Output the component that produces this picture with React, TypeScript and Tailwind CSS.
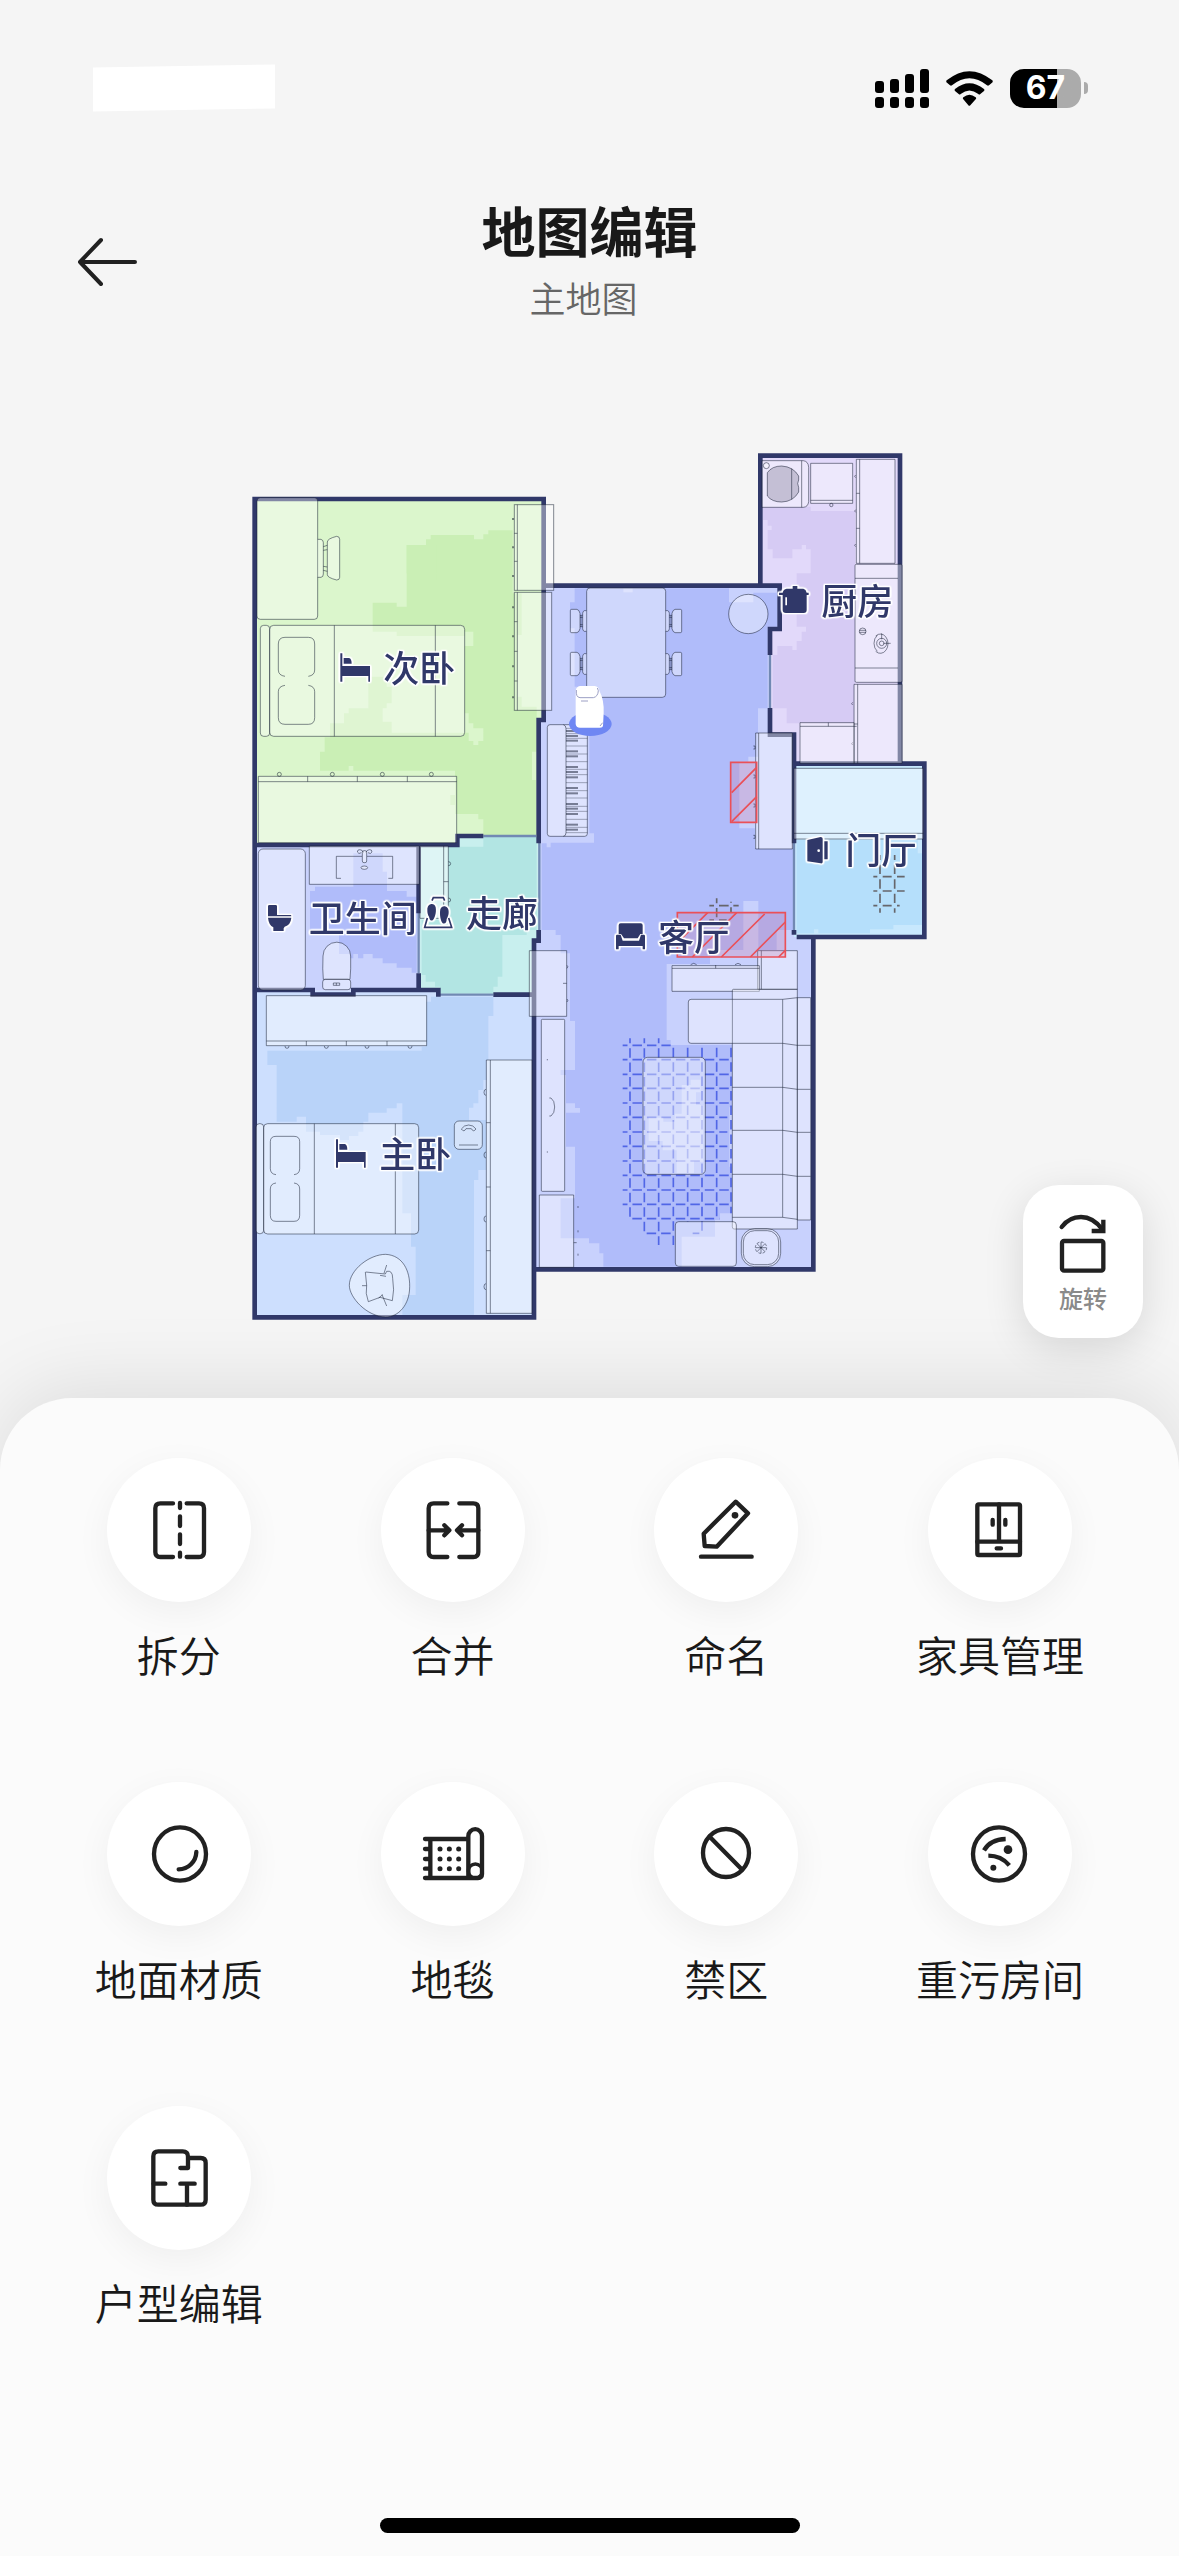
import type { ReactNode } from "react";

const ink = "#212121";
const navy = "#303869";

const line = {
  fill: "none",
  stroke: ink,
  strokeWidth: 13,
  strokeLinecap: "round",
  strokeLinejoin: "round",
} as const;

const tools: { label: string; viewBox: string; icon: ReactNode }[] = [
  {
    label: "拆分",
    viewBox: "249 162 216 216",
    icon: (
      <>
        <path d="M339 190H301Q286 190 286 205V336Q286 351 301 351H339M380 190H417Q432 190 432 205V336Q432 351 417 351H380" />
        <path d="M360 189V204M360 229V258M360 283V312M360 338V350" />
      </>
    ),
  },
  {
    label: "合并",
    viewBox: "1070 162 216 216",
    icon: (
      <>
        <path d="M1161 190H1120Q1105 190 1105 205V336Q1105 351 1120 351H1161M1197 190H1239Q1254 190 1254 205V336Q1254 351 1239 351H1197" />
        <path d="M1105 271H1163M1152 256L1167 271L1152 286M1254 271H1195M1205 256L1190 271L1205 286" />
      </>
    ),
  },
  {
    label: "命名",
    viewBox: "211 162 216 216",
    icon: (
      <>
        <path d="M348 185L385 220L291 320L255 318L252 281Z" />
        <circle cx="346" cy="226" r="10" fill={ink} stroke="none" />
        <path d="M244 350H396" />
      </>
    ),
  },
  {
    label: "家具管理",
    viewBox: "1032 162 216 216",
    icon: (
      <>
        <rect x="1072" y="193" width="128" height="152" rx="4" />
        <path d="M1137 193V304M1072 305H1200M1118 240V254M1156 240V254M1130 325H1143" />
      </>
    ),
  },
  {
    label: "地面材质",
    viewBox: "249 174 216 216",
    icon: (
      <>
        <ellipse cx="360" cy="282" rx="78" ry="80" />
        <path d="M409 276C408 305 385 328 356 328" />
      </>
    ),
  },
  {
    label: "地毯",
    viewBox: "1070 174 216 216",
    icon: (
      <>
        <path d="M1094 237H1220M1094 354H1253Q1265 354 1265 342V228A20 20 0 0 0 1224 228V354M1110 237V354M1094 267H1108M1094 297H1108M1094 326H1108" />
        <circle cx="1245" cy="333" r="21" strokeWidth="10" />
        <path
          strokeWidth="15"
          d="M1139 267h.1M1167 267h.1M1195 267h.1M1139 297h.1M1167 297h.1M1195 297h.1M1139 326h.1M1167 326h.1M1195 326h.1"
        />
      </>
    ),
  },
  {
    label: "禁区",
    viewBox: "211 174 216 216",
    icon: (
      <>
        <ellipse cx="319" cy="279" rx="69" ry="72" />
        <path d="M270 230L366 328" />
      </>
    ),
  },
  {
    label: "重污房间",
    viewBox: "1032 174 216 216",
    icon: (
      <>
        <ellipse cx="1137" cy="282" rx="78" ry="80" />
        <path strokeLinecap="butt" d="M1092 271C1104 250 1126 238 1157 237M1105 287C1130 287 1151 296 1168 316" />
        <circle cx="1164" cy="269" r="13" fill={ink} stroke="none" />
        <circle cx="1120" cy="323" r="9" fill={ink} stroke="none" />
      </>
    ),
  },
  {
    label: "户型编辑",
    viewBox: "249 156 216 216",
    icon: (
      <>
        <path d="M361 234H384V200Q384 184 368 184H295Q280 184 280 199V329Q280 344 295 344H422Q437 344 437 329V219Q437 204 422 204H386" />
        <path d="M281 281H316M361 281H404M381 281V344" />
      </>
    ),
  },
];

// Map drawing units are a third of a pixel.
function Floors() {
  return (
    <>
      <path fill="#dbf6cc" d="M44 177H910V840H896V1188H655V1215H44Z" />
      <path
        fill="#caefb5"
        d="M500 315H558V298H572V285H702V298H730V283H745V271H818V460H845V585H832V770H845V800H890V935H876V1020H888V1188H730V1138H715V1122H645V1095H631V1065H645V992H543V978V992H340V978H326V992H240V935H254V892H270V850H312V820H326V805H385V710H440V740H455V790H440V805H428V845H455V878H686V903H700V915H715V903H730V865H700V850H686V820H674V618H700V575H674V588H470V575H398V488H470V500H500Z"
      />
      <path fill="#caefb5" d="M500 315H590V420H512V400H500Z" />

      {/* living room */}
      <path
        fill="#c8d1fd"
        d="M910 437H1619V567H1590V884H1662V1491H1720V2488H882V1500H898V840H910Z"
      />
      <path
        fill="#b0bcfa"
        d="M1004 445H1467V487H1540V458H1612V560H1583V805H1554V950H1525V965H1498V1165H1545V1225H1660V1470H1610V1530H1555V1383H1510V1530H1410V1572H1280V1800H1292V1815H1476V2002H1468V2180H1476V2320H1440V2340H1425V2390H1325V2480H1090V2440H1078V2410H1047V2395H962V2275H1005V2120H978V2018H1020V2004H1005V1990H978V1905H962V1890H1005V1743H990V1540H962V1485H947V1470H905V1210H920V1222H932V1208H1062V1180H1048V870H1020V740H1004V565H990V487H1004Z"
      />
      <path fill="#c8d1fd" d="M1150 445h28v12h-28z" />

      {/* kitchen */}
      <path fill="#e2d9fa" d="M1561 47H1980V970H1662V884H1590V567H1619V437H1561Z" />
      <path
        fill="#d6cbf4"
        d="M1569 200H1712V213H1845V850H1640V805H1598V645H1612V618H1657V630H1670V603H1685V575H1698V560H1670V400H1712V328H1698V315H1685V328H1657V355H1598V328H1583V270H1595V257H1583V240H1569Z"
      />

      {/* entrance */}
      <path fill="#c8e8fd" d="M1662 971H2053V1491H1662Z" />
      <path fill="#b5dffb" d="M1670 1200H2033V1240H2046V1455H1960V1468H1890V1480H1735V1468H1722V1480H1670Z" />

      <g transform="translate(0 1140)">
        {/* bathroom */}
        <path fill="#c9d2fd" d="M44 75H536V512H44Z" />
        <path
          fill="#b0bcfa"
          d="M210 213H225V200H340V100H428V155H441V213H500V230H530V458H515V443H470V430H428V415H398V402H370V415H354V402H340V415H330V402H297V345H210Z"
        />
        {/* corridor */}
        <path fill="#c8efee" d="M540 75H655V47H896V360H882V524H600V512H540Z" />
        <path
          fill="#b2e5e3"
          d="M625 80H730V50H890V330H860V345H787V470H773V500H760V520H600V500H585V485H557V465H545V300H625Z"
        />
        {/* master bedroom */}
        <path fill="#cddffe" d="M44 512H595V524H882V1492H44Z" />
        <path
          fill="#b9d3f9"
          d="M558 545H573V530H760V588H745V720H740V780H730V810H715V850H700V863H687V900H738V1050H715V1080H702V1485H487V1425H527V1280H513V1180H487V850H470V865H440V878H385V905H370V935H355V948H327V960H300V945H240V935H198V890H170V905H110V735H82V692H545V680H558Z"
        />
      </g>
    </>
  );
}

function Walls() {
  return (
    <>
      <g fill="none" stroke="#7189b3" strokeWidth="7">
        <path d="M730 1188H888M1590 645V806M898 1208V1470M1662 1208V1470M536 1400V1600M600 1664H760" />
      </g>
      <g fill="none" stroke={navy} strokeWidth="14">
        <path d="M896 1210V840H911V177H44V2632H882V1502H896V1470" />
        <path d="M44 1215H652V1188H730M911 437H1619V567H1590V645M1561 437V47H1980V971M1590 804V884H1662V1210M1662 971H2053V1491H1670M1662 1470V1484M1720 1491V2488H882" />
        <path d="M44 1650H218V1664H340V1650H595V1670M760 1664H882M536 1600V1650M536 1215V1420" />
      </g>
    </>
  );
}

const rugColumns = [
  { x: 330, from: 655, to: 1190 },
  { x: 373, from: 655, to: 1235 },
  { x: 416, from: 655, to: 1275 },
  { x: 460, from: 683, to: 1275 },
  { x: 503, from: 683, to: 1205 },
  { x: 546, from: 683, to: 1235 },
  { x: 590, from: 683, to: 1200 },
  { x: 633, from: 683, to: 1180 },
];

const rugRows = [
  { y: 676, from: 308, to: 452 },
  { y: 719, from: 308, to: 636 },
  { y: 763, from: 308, to: 636 },
  { y: 805, from: 308, to: 636 },
  { y: 849, from: 308, to: 636 },
  { y: 892, from: 308, to: 622 },
  { y: 936, from: 308, to: 622 },
  { y: 979, from: 308, to: 622 },
  { y: 1023, from: 308, to: 622 },
  { y: 1066, from: 308, to: 636 },
  { y: 1110, from: 308, to: 636 },
  { y: 1153, from: 308, to: 636 },
  { y: 1196, from: 337, to: 598 },
  { y: 1240, from: 380, to: 460 },
];

function Rugs() {
  return (
    <g transform="translate(840 1140)" fill="none" strokeWidth="5">
      <g stroke="#5166e6" strokeDasharray="28.5 14.9">
        {rugColumns.map((c) => (
          <path key={c.x} d={`M${c.x} ${c.from}V${c.to}`} strokeDashoffset={c.from === 655 ? 14 : 0} />
        ))}
        {rugRows.map((r) => (
          <path key={r.y} d={`M${r.from} ${r.y}H${r.to}`} strokeDashoffset={r.from === 308 ? 14 : 0} />
        ))}
        <path d="M518 1240H538" />
      </g>
      <g stroke="#66666b">
        <path d="M590 235V250M590 264V292M633 245V248M633 262V277M568 257H582M597 257H626M640 257H656M568 300H582M597 300H620" />
        <path d="M1080 105V120M1080 134V162M1080 178V206M1080 221V249M1080 265V278M1124 105V120M1124 134V162M1124 178V206M1124 221V249M1124 265V278" />
        <path d="M1060 170H1072M1088 170H1115M1131 170H1154M1060 213H1072M1088 213H1115M1131 213H1154M1060 257H1072M1088 257H1115M1131 257H1139" />
      </g>
    </g>
  );
}

function DiningChair({ x, y, flip }: { x: number; y: number; flip?: boolean }) {
  return (
    <g transform={flip ? `translate(${x} ${y}) scale(-1 1)` : `translate(${x} ${y})`}>
      <path d="M4 0H20Q27 2 29 12V58Q27 68 20 70H4Q0 70 0 66V4Q0 0 4 0Z" />
      <path d="M48 4H42Q37 6 37 12V58Q37 64 42 66H48M29 18H37M29 24H37M29 46H37M29 52H37M32 18V52" />
    </g>
  );
}

function PianoKeys() {
  const black = [873, 888, 902, 934, 949, 981, 996, 1012, 1044, 1060, 1092, 1106, 1122, 1154, 1169];
  const white = [865, 881, 895, 918, 942, 965, 988, 1004, 1028, 1052, 1074, 1099, 1114, 1138, 1162, 1178];
  return (
    <g fill="none">
      {white.map((y) => (
        <path key={y} d={`M978 ${y}H1042`} strokeWidth="2" />
      ))}
      {black.map((y) => (
        <path key={y} d={`M978 ${y}H1014`} strokeWidth="6" />
      ))}
    </g>
  );
}

function Furniture() {
  return (
    <g className="fill-white/40 stroke-slate-900/50" strokeWidth="3">
      {/* second bedroom */}
      <rect x="51" y="173" width="182" height="365" rx="10" />
      <path d="M233 298H243Q250 300 250 308V402Q250 411 243 412H233M250 320L262 316M250 331L262 329M250 379L262 381M250 391L262 394" />
      <path d="M262 306Q262 296 290 289Q299 289 299 298V412Q299 420 290 420Q262 413 262 404Z" />
      <rect x="61" y="556" width="28" height="333" rx="10" />
      <rect x="89" y="556" width="585" height="333" rx="12" />
      <path fill="none" d="M283 556V889M586 556V889" />
      <path className="fill-none" d="M135 709Q115 706 115 690V612Q115 592 135 592H205Q224 592 224 612V690Q224 706 205 709M135 736Q115 739 115 755V833Q115 853 135 853H205Q224 853 224 833V755Q224 739 205 736" />
      <rect x="823" y="194" width="118" height="257" />
      <rect x="823" y="457" width="112" height="354" />
      <path fill="none" d="M832 194V451M832 457V811M823 280H832M823 364H832M823 545H832M823 634H832M823 723H832" />
      <path fill="none" d="M816 237h6M816 322h6M816 408h6M816 502h6M816 589h6M816 679h6M816 772h6" strokeWidth="6" />
      <path d="M55 1009H650V1208H55Z" />
      <path fill="none" d="M55 1025H650M203 1009V1025M352 1009V1025M502 1009V1025" />
      <g fill="none">
        <circle cx="118" cy="1003" r="6" />
        <circle cx="277" cy="1003" r="6" />
        <circle cx="427" cy="1003" r="6" />
        <circle cx="574" cy="1003" r="6" />
      </g>

      {/* dining area and piano */}
      <rect x="1040" y="444" width="237" height="328" rx="10" />
      <DiningChair x={991} y={508} />
      <DiningChair x={991} y={637} />
      <DiningChair x={1325} y={508} flip />
      <DiningChair x={1325} y={637} flip />
      <circle cx="1525" cy="522" r="59" />
      <rect x="922" y="854" width="120" height="335" rx="8" />
      <path fill="none" d="M970 854Q978 856 978 866V1178Q978 1188 970 1189" />
      <PianoKeys />
      <path d="M1547 879H1657V1227H1547Z" />
      <path fill="none" d="M1556 879V1227M1540 918h5v9h-5M1540 1005h5v9h-5M1540 1092h5v9h-5M1540 1186h5v9h-5" />

      {/* kitchen */}
      <path d="M1566 62H1690Q1705 64 1706 82V185Q1704 201 1690 202H1566Z" />
      <path fill="none" d="M1685 62V202" />
      <circle cx="1579" cy="77" r="9" />
      <path
        className="fill-[#a8a4bb]/60"
        d="M1582 98Q1596 78 1625 78Q1660 80 1676 108V120Q1670 130 1676 142V156Q1660 185 1625 186Q1596 186 1582 168Z"
      />
      <path fill="none" d="M1655 86V178" />
      <path d="M1712 70H1838V190H1712Z" />
      <path fill="none" d="M1712 181H1838" />
      <circle cx="1774" cy="195" r="5" fill="none" />
      <path d="M1849 58H1965V370H1849Z" />
      <path fill="none" d="M1859 58V370M1849 160H1859M1849 265H1859" />
      <path fill="none" d="M1847 105q-6 4 0 8M1847 209q-6 4 0 8M1847 312q-6 4 0 8M1838 787q-6 4 0 8M1838 907q-6 4 0 8" />
      <rect x="1845" y="373" width="141" height="354" rx="4" />
      <path fill="none" d="M1845 415H1974M1845 684H1974" />
      <g fill="none">
        <circle cx="1868" cy="574" r="10" />
        <path d="M1858 571H1878M1858 577H1878" />
        <path d="M1907 588A23 29 0 1 1 1907 634M1902 610A23 29 0 0 1 1912 586M1912 634A23 29 0 0 1 1902 610M1925 598V580M1930 610H1952" />
        <circle cx="1925" cy="610" r="15" />
        <circle cx="1925" cy="610" r="7" />
      </g>
      <path d="M1842 733H1986V970H1842Z" />
      <path fill="none" d="M1853 733V970" />
      <path d="M1680 848H1842V970H1680Z" />
      <path fill="none" d="M1680 859H1850M1765 848V859M1842 852H1853" />

      {/* entrance cabinet */}
      <path d="M1662 985H2050V1197H1662Z" />
      <path fill="none" d="M1662 1180H2050M1858 1180V1190" />

      <g transform="translate(0 1140)">
        {/* bathroom */}
        <rect x="55" y="87" width="141" height="423" rx="14" />
        <path d="M208 78H538V193H208Z" />
        <path fill="none" d="M303 175H289V109H366M381 109H458V175H445" />
        <rect x="367" y="92" width="13" height="36" rx="5" />
        <path fill="none" d="M352 96q0 -8 8 -7t10 8M396 96q0 -8 -8 -7t-10 8M352 96q4 8 12 2M396 96q-4 8 -12 2" />
        <ellipse cx="373" cy="143" rx="10" ry="5" />
        <path d="M250 478Q247 450 249 408A41 41 0 0 1 332 408Q333 450 330 478Z" />
        <rect x="248" y="478" width="84" height="31" rx="8" />
        <path fill="none" d="M280 489h19v7h-19zM289 489v7" />
        {/* corridor cabinet */}
        <path d="M540 78H625V295H540Z" />
        <path fill="none" d="M611 78V295M611 185H625M625 125q7 0 7 6t-7 6M625 234q7 0 7 6t-7 6" />
        {/* master bedroom */}
        <path d="M79 527H560V677H79Z" />
        <path fill="none" d="M79 663H560M199 663V677M319 663V677M441 663V677" />
        <path fill="none" d="M135 678q0 7 6 7t6 -7M253 678q0 7 6 7t6 -7M375 678q0 7 6 7t6 -7M504 678q0 7 6 7t6 -7" />
        <rect x="48" y="911" width="23" height="330" rx="10" />
        <rect x="71" y="911" width="465" height="331" rx="12" />
        <path fill="none" d="M223 911V1242M466 911V1242" />
        <path className="fill-none" d="M108 1064Q91 1062 91 1046V965Q91 949 108 949H162Q179 949 179 965V1046Q179 1062 162 1064M108 1089Q91 1091 91 1107V1186Q91 1204 108 1204H162Q179 1204 179 1186V1107Q179 1091 162 1089" />
        <path d="M739 720H876V1480H739Z" />
        <path fill="none" d="M751 720V1480M739 908H751M739 1101H751M739 1292H751" />
        <path fill="none" d="M738 808q-6 0 -6 9t6 9M738 996q-6 0 -6 9t6 9M738 1188q-6 0 -6 9t6 9M738 1391q-6 0 -6 9t6 9" />
        <rect x="643" y="903" width="84" height="85" rx="14" />
        <path className="fill-none" d="M657 975H714M664 927Q672 915 686 915Q700 915 708 927Q700 938 694 926H678Q672 938 664 927Z" />
        <path d="M328 1396C328 1350 388 1303 437 1303C490 1306 510 1355 509 1400C509 1455 475 1491 437 1491C380 1490 328 1432 328 1396Z" />
        <path className="fill-none" d="M377 1356L436 1362L440 1354Q458 1350 458 1375Q464 1410 457 1442L420 1432L385 1445Q375 1420 380 1396L376 1356M440 1335L432 1360M420 1366L438 1369M366 1397H380M426 1424L440 1458M416 1434L428 1424" />
      </g>

      {/* living room */}
      <g transform="translate(840 1140)">
        <path d="M28 392H140V589H28Z" />
        <path fill="none" d="M129 490H140M141 436q5 4 0 9M141 537q5 4 0 9" />
        <rect x="64" y="598" width="70" height="516" rx="3" />
        <path className="fill-none" d="M82 717v4M82 994v4M88 834H93Q104 842 104 861Q104 880 93 888H88" />
        <path d="M58 1125H161V1342H58Z" />
        <path fill="none" d="M174 1158v6M174 1231v6M161 1268H170M174 1301v6" />
        <path d="M713 392H832V508H713Z" />
        <path d="M456 437H718V514H456Z" />
        <path className="fill-none" d="M456 445H718M587 435V445M724 392V508M512 434q9 -8 18 0M645 434q9 -8 18 0" />
        <path d="M640 508H832V1227H642Q637 1227 637 1220V512Q637 508 640 508Z" />
        <path d="M637 538H513Q505 538 505 546V662Q505 670 513 670H637" />
        <path
          className="fill-none"
          d="M637 538H788V1192M637 670H788M637 802H788M637 931H788M637 1063H788M637 1192H788M788 538L832 533M788 670L832 676M788 802L832 808M788 931L832 937M788 1063L832 1069M788 1192L832 1198"
        />
        <path d="M832 533H872V1200H832Z" />
        <path fill="none" d="M832 676H872M832 808H872M832 937H872M832 1069H872" />
        <rect x="369" y="712" width="187" height="351" rx="14" />
        <path className="fill-white/30 stroke-none" d="M485 795h27v-16h30v38h-14v38h22v170h-28v34h-52v-68h-42v-28h-42v-70h44v12h34v-24h21z" />
        <rect x="466" y="1205" width="183" height="134" rx="10" />
        <rect x="664" y="1226" width="118" height="114" rx="40" />
        <rect x="670" y="1232" width="106" height="102" rx="34" className="fill-none" />
        <path className="fill-none" d="M723 1267V1300M707 1283H739M711 1271L735 1295M735 1271L711 1295" />
        <circle cx="723" cy="1283" r="17" className="fill-none" strokeDasharray="8 5" />
      </g>
    </g>
  );
}

function ForbiddenZones() {
  return (
    <g fill="#c8709a" fillOpacity="0.25" stroke="#ea5058" strokeWidth="5">
      <path d="M1472 967H1550V1147H1472Z" />
      <path fill="none" d="M1475 1058L1550 982M1475 1145L1550 1070" />
      <path d="M1312 1418H1636V1551H1312Z" />
      <path fill="none" d="M1312 1509L1403 1418M1357 1551L1490 1418M1444 1551L1574 1422M1531 1551L1636 1446M1616 1551L1636 1531" />
    </g>
  );
}

const BedIcon = ({ x, y }: { x: number; y: number }) => (
  <path
    transform={`translate(${x} ${y})`}
    d="M0 0H6V38H89V85H84V68H6V85H0ZM10 14H26Q34 16 34 31H10Z"
  />
);

const rooms: { name: string; x: number; y: number; icon: ReactNode }[] = [
  { name: "次卧", x: 430, y: 726, icon: <BedIcon x={301} y={640} /> },
  { name: "主卧", x: 418, y: 2184, icon: <BedIcon x={288} y={2098} /> },
  {
    name: "卫生间",
    x: 206,
    y: 1476,
    icon: <path d="M84 1399Q84 1395 88 1395H107Q111 1395 111 1399V1425H152Q154 1425 154 1429H84ZM84 1433H154Q152 1455 134 1460L131 1465V1473H100V1462Q86 1455 84 1433Z" />,
  },
  {
    name: "走廊",
    x: 678,
    y: 1460,
    icon: (
      <>
        <path d="M562 1410C561 1390 583 1386 587 1402C590 1418 584 1436 578 1441C569 1444 569 1436 567 1430C563 1424 562 1418 562 1410ZM626 1416C627 1397 606 1392 601 1408C598 1424 602 1444 608 1450C617 1453 620 1445 620 1437C624 1430 626 1424 626 1416Z" />
        <path fill="none" stroke={navy} strokeWidth="5" d="M576 1382L580 1373H610L614 1382M562 1434L554 1462H635L626 1434" />
      </>
    ),
  },
  {
    name: "客厅",
    x: 1254,
    y: 1534,
    icon: (
      <path d="M1142 1450H1202Q1208 1450 1208 1456V1482H1201L1193 1495H1152L1143 1482H1136V1456Q1136 1450 1142 1450ZM1131 1484H1142L1148 1502H1197L1203 1484H1211Q1215 1484 1215 1488V1528H1208V1518H1136V1528H1128V1488Q1128 1484 1131 1484Z" />
    ),
  },
  {
    name: "厨房",
    x: 1744,
    y: 525,
    icon: (
      <path d="M1658 438H1672V446H1690Q1698 448 1700 458H1706V465H1700V510Q1700 519 1691 519H1638Q1628 519 1628 510V465H1617V458H1628Q1630 448 1640 446H1658ZM1636 472V496H1641V472Z" fillRule="evenodd" />
    ),
  },
  {
    name: "门厅",
    x: 1816,
    y: 1273,
    icon: (
      <>
        <path d="M1702 1200L1742 1191Q1748 1191 1748 1196V1266Q1748 1271 1742 1270L1702 1264ZM1753 1204H1763V1258H1753Z" />
        <circle cx="1736" cy="1232" r="4" fill="#fff" />
      </>
    ),
  },
];

function FloorPlan() {
  return (
    <svg viewBox="0 0 2100 2670" className="w-[700px] max-w-full" role="img" aria-label="主地图">
      <Floors />
      <Rugs />
      <Walls />
      <Furniture />
      <ForbiddenZones />

      {/* robot on its dock */}
      <ellipse cx="1051" cy="852" rx="64" ry="36" fill="#6f87f3" />
      <path fill="#fff" d="M1020 738H1064Q1076 740 1078 752Q1093 780 1091 820L1089 858Q1088 863 1080 863H1020Q1008 863 1007 852V752Q1009 740 1020 738Z" />
      <path fill="none" stroke="#9c9fc4" strokeWidth="3" d="M1009 750Q1007 772 1020 773H1060Q1074 770 1075 752L1072 744M1023 783H1044M1080 858L1088 848" />

      {/* white halo keeps the names readable over walls and furniture */}
      <g
        fill={navy}
        className="[filter:drop-shadow(4px_0_0_#fff)_drop-shadow(-4px_0_0_#fff)_drop-shadow(0_4px_0_#fff)_drop-shadow(0_-4px_0_#fff)]"
      >
        {rooms.map((room) => (
          <g key={room.name}>
            {room.icon}
            <text x={room.x} y={room.y} fontSize="108" className="font-medium">
              {room.name}
            </text>
          </g>
        ))}
      </g>
    </svg>
  );
}

function StatusBar() {
  return (
    <div className="flex h-44 items-center justify-between pr-[91px] pl-[93px]">
      <div className="h-11 w-[182px] -skew-y-1 bg-white" />
      <div className="flex items-center gap-[17px]">
        <svg viewBox="0 0 54 39" className="h-[39px] w-[54px]">
          <rect x="0" y="12" width="9" height="12" rx="3" />
          <rect x="15" y="10" width="9" height="14" rx="3" />
          <rect x="30" y="5" width="9" height="19" rx="3" />
          <rect x="45" y="0" width="9" height="24" rx="3" />
          <rect x="0" y="28" width="9" height="11" rx="3" />
          <rect x="15" y="28" width="9" height="11" rx="3" />
          <rect x="30" y="28" width="9" height="11" rx="3" />
          <rect x="45" y="28" width="9" height="11" rx="3" />
        </svg>
        <svg viewBox="0 0 141 105" className="h-[35px] w-[47px]">
          <path d="M2 28Q70 -27 139 28Q142 32 138 35L129 43Q126 45 123 43Q70 1 18 43Q15 45 12 43L3 35Q-1 32 2 28Z" />
          <path d="M27 54Q70 19 114 54Q117 57 114 60L103 69Q100 72 97 69Q70 48 44 69Q41 72 38 69L27 60Q24 57 27 54Z" />
          <path d="M52 79Q70 64 89 79Q92 82 89 85L73 103Q70 106 67 103L52 85Q49 82 52 79Z" />
        </svg>
        <div className="flex items-center gap-[3px]">
          <div className="flex h-[39px] w-[71px] items-center justify-center rounded-[14px] bg-linear-to-r from-black from-66% to-[#ababab] to-66% font-['Inter'] text-[32px] font-bold text-white">
            67
          </div>
          <div className="h-3 w-1 rounded-r-full bg-[#ababab]" />
        </div>
      </div>
    </div>
  );
}

export default function App() {
  return (
    <div className="flex min-h-screen flex-col overflow-hidden bg-[#f5f5f5] font-['Noto_Sans_CJK_SC',sans-serif] text-[#191919]">
      <StatusBar />

      <header className="mt-4 grid grid-cols-[1fr_auto_1fr] items-center px-[77px]">
        <button type="button" aria-label="返回" className="w-[60px] pt-2">
          <svg viewBox="0 0 60 50" className="w-full" fill="none" stroke={ink} strokeWidth="4" strokeLinecap="round" strokeLinejoin="round">
            <path d="M24 4L3 26L24 48M3 26H58" />
          </svg>
        </button>
        <div className="text-center">
          <h1 className="text-[54px] leading-[76px] font-bold">地图编辑</h1>
          <p className="mt-1 pr-3 text-[36px] leading-[50px] font-[350] text-[#666666]">主地图</p>
        </div>
      </header>

      <main className="relative flex justify-center pt-[118px] pb-[68px]">
        <FloorPlan />
        <button
          type="button"
          className="absolute right-9 bottom-[60px] z-10 flex h-[153px] w-[120px] flex-col items-center rounded-[36px] bg-white pt-[27px] shadow-[0_10px_40px_rgba(0,0,0,0.12)]"
        >
          <svg viewBox="203 156 150 186" className="h-[62px] w-[50px]" {...line}>
            <path d="M214 201Q236 171 272 171Q308 171 336 208" />
            <path d="M339 179V213H304" strokeLinecap="butt" strokeLinejoin="miter" />
            <rect x="215" y="243" width="124" height="89" rx="6" />
          </svg>
          <span className="mt-2 text-[24px] leading-8 font-medium text-[#8a8a8a]">旋转</span>
        </button>
      </main>

      <section className="flex flex-1 flex-col justify-between rounded-t-[72px] bg-[#fbfbfb] px-[42px] pt-[60px] pb-[23px] shadow-[0_-10px_80px_rgba(0,0,0,0.1)]">
        <div className="grid grid-cols-4 gap-y-24">
          {tools.map((tool) => (
            <button key={tool.label} type="button" className="flex flex-col items-center">
              <span className="flex size-36 items-center justify-center rounded-full bg-white shadow-[0_10px_36px_rgba(0,0,0,0.05)]">
                <svg viewBox={tool.viewBox} className="size-[72px]" {...line}>
                  {tool.icon}
                </svg>
              </span>
              <span className="mt-5 text-[42px] leading-[64px] font-[350]">{tool.label}</span>
            </button>
          ))}
        </div>
        <div className="h-[15px] w-[420px] self-center rounded-full bg-black" />
      </section>
    </div>
  );
}
